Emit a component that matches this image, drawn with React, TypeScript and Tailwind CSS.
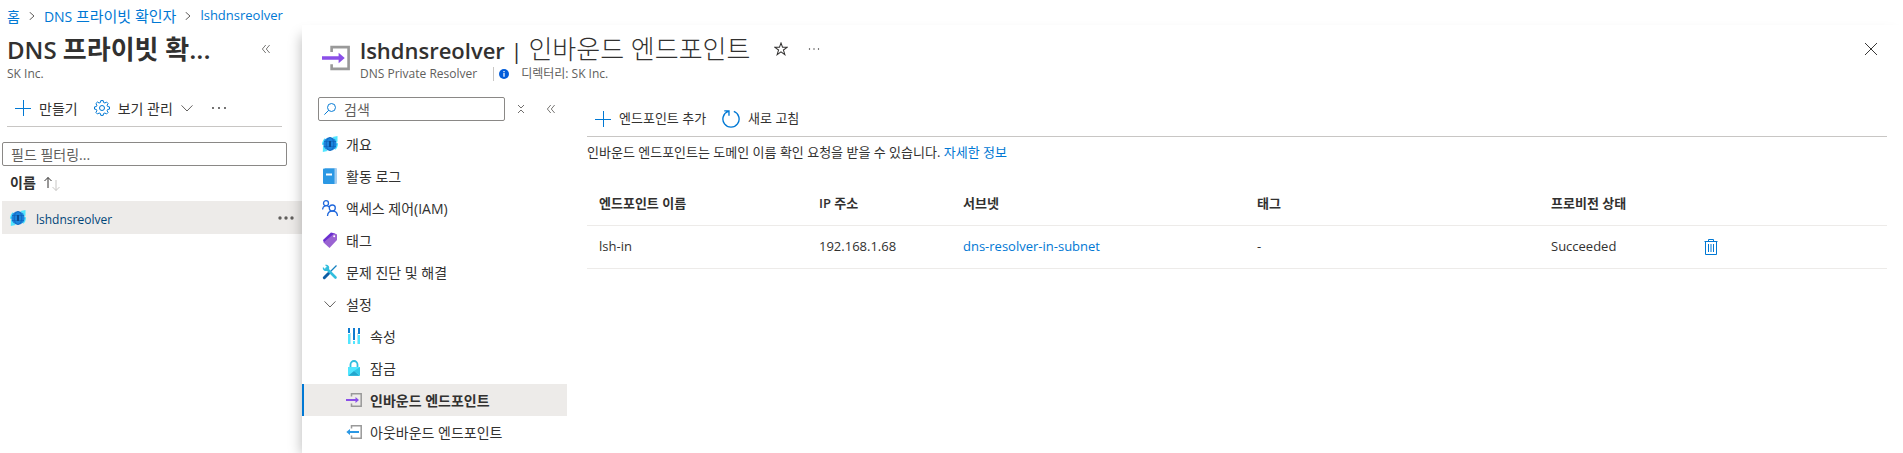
import type { ReactNode, SVGProps } from 'react'

// Base wrapper for every inline icon
function Svg({ children, className = 'h-4 w-4', ...rest }: SVGProps<SVGSVGElement>) {
  return (
    <svg viewBox="0 0 16 16" fill="none" aria-hidden="true" className={`${className} shrink-0`} {...rest}>
      {children}
    </svg>
  )
}

function PlusIcon() {
  return (
    <Svg>
      <path d="M8.5 0v16M0 8.5h16" stroke="#0078d4" />
    </Svg>
  )
}

function GearIcon() {
  return (
    <Svg>
      <path
        d="M6.8 .6h2.4l.4 1.9 1.3.5 1.6-1 1.6 1.6-1 1.6.5 1.3 1.9.4v2.2l-1.9.4-.5 1.3 1 1.6-1.6 1.6-1.6-1-1.3.5-.4 1.9H6.8l-.4-1.9-1.3-.5-1.6 1-1.6-1.6 1-1.6-.5-1.3L.5 9.1V6.9l1.9-.4.5-1.3-1-1.6L3.5 2l1.6 1 1.3-.5z"
        stroke="#0078d4"
      />
      <circle cx="8" cy="8" r="2.5" stroke="#0078d4" />
    </Svg>
  )
}

function ChevronDown({ className = 'h-3 w-3' }) {
  return (
    <Svg className={className}>
      <path d="M.7 4.5L8 12l7.3-7.5" stroke="#605e5c" strokeWidth="1.3" />
    </Svg>
  )
}

function ChevronRight() {
  return (
    <Svg className="h-2 w-2">
      <path d="M3 0l9 8-9 8" stroke="#605e5c" strokeWidth="2" />
    </Svg>
  )
}

function DoubleChevronLeft() {
  return (
    <Svg className="h-2 w-2">
      <path d="M7.5 0L.7 8l6.8 8M15.3 0L8.5 8l6.8 8" stroke="#605e5c" strokeWidth="1.7" />
    </Svg>
  )
}

function CollapseIcon() {
  return (
    <Svg className="h-2 w-2">
      <path d="M2 0l6 6 6-6M2 16l6-6 6 6" stroke="#605e5c" strokeWidth="1.8" />
    </Svg>
  )
}

function Dots({ className = 'h-4 w-4 text-[#323130]', r = 0.9 }) {
  return (
    <Svg className={className}>
      <g fill="currentColor">
        <circle cx="2" cy="8" r={r} />
        <circle cx="8" cy="8" r={r} />
        <circle cx="14" cy="8" r={r} />
      </g>
    </Svg>
  )
}

function ResolverIcon() {
  return (
    <Svg>
      <path d="M10.5 1L15.5 0v5L15 7zM5.500 15L.8 16l.2-7zM0 9a8 8 0 0 1 3-7l1 6zM16 7a8 8 0 0 1-3 7l-1-6z" fill="#50e6ff" />
      <circle cx="8" cy="8" r="6.7" fill="#1b84dd" />
      <path d="M2 5.5h12M2 10.5h12" stroke="#0f66bd" strokeWidth=".7" />
      <ellipse cx="8" cy="8" rx="3.8" ry="6.5" stroke="#0f62b8" strokeWidth=".8" />
      <path d="M7 5h2v6H7z" fill="#0a4c94" />
    </Svg>
  )
}

function LogIcon() {
  return (
    <Svg>
      <path d="M3 0h11a1 1 0 0 1 1 1v14a1 1 0 0 1-1 1H3z" fill="#a3cdf0" />
      <path d="M2 .5h10.5V16H2a1 1 0 0 1-1-1V1.5a1 1 0 0 1 1-1z" fill="#2b98e4" />
      <path d="M4 5.5h6v2H4z" fill="#fff" />
    </Svg>
  )
}

function AccessIcon() {
  return (
    <Svg>
      <g stroke="#2068dc" strokeWidth="1.3">
        <circle cx="4" cy="3.2" r="2.5" />
        <circle cx="10.3" cy="8" r="3" />
        <path d="M.6 9.5C.6 5 5.5 5 7 7M5.5 16c.3-6.5 9.7-6.5 10 0" />
      </g>
    </Svg>
  )
}

function TagIcon() {
  return (
    <Svg>
      <path d="M9 .5L1 8l1 3L13 1.5z" fill="#6b2fd0" />
      <path d="M12.5 1.2L15 2.5V8l-7.500 8-6-5.500z" fill="#9a63d2" />
      <circle cx="12.2" cy="4.2" r="1" fill="#fff" />
    </Svg>
  )
}

function ToolsIcon() {
  return (
    <Svg>
      <path d="M14.5 1.5L7 9" stroke="#1580c0" strokeWidth="1.3" />
      <path d="M6.5 9.5l-4.200 4.200" stroke="#0d5ea6" strokeWidth="3" strokeLinecap="round" />
      <path d="M4.5 4.5l9 9" stroke="#32bedd" strokeWidth="2.6" strokeLinecap="round" />
      <path d="M3 1l2 2-.5 1.5L3 5 1 3C0 6 3 8 5.5 6.5L7 5C8 2.5 5.5.3 3 1z" fill="#32bedd" />
    </Svg>
  )
}

function PropertiesIcon() {
  return (
    <Svg>
      <path d="M2 6h2v10H2zM7 13h2v3H7zM12 7h2v9h-2z" fill="#50e6ff" />
      <path d="M2 0h2v5H2zM7 0h2v12H7zM12 0h2v6h-2z" fill="#0f7bd0" />
      <path d="M4.5 5v11M11.5 5v11" stroke="#b4e6f5" />
    </Svg>
  )
}

function LockIcon() {
  return (
    <Svg>
      <path d="M4.5 8V4.5a3.5 3.5 0 0 1 7 0V8" stroke="#32bedd" strokeWidth="1.8" />
      <path d="M2 7h12v8a1 1 0 0 1-1 1H3a1 1 0 0 1-1-1z" fill="#50e6ff" />
      <path d="M14 7v8.5L8 11z" fill="#32c8e8" />
      <path d="M2.3 15.7L8 11l5.7 4.7z" fill="#22a5cc" />
    </Svg>
  )
}

function InboundIcon({ className = 'h-4 w-4' }) {
  return (
    <Svg className={className}>
      <path d="M5.5 4.5V1.8h9.7v12.4H5.5v-2.700" stroke="#999" strokeWidth="1.5" />
      <path d="M0 7h9.5V5L13 8l-3.5 3V9H0z" fill="#8a4fe8" />
    </Svg>
  )
}

function OutboundIcon() {
  return (
    <Svg>
      <path d="M5.5 4.5V1.8h9.7v12.4H5.5v-2.700" stroke="#999" strokeWidth="1.5" />
      <path d="M13 7H4V5L.3 8 4 11V9h9z" fill="#2b98e4" />
    </Svg>
  )
}

function RefreshIcon() {
  return (
    <Svg className="h-[18px] w-[18px]">
      <path d="M10.5 1.3A7.200 7.200 0 1 1 5.5 1.3M2 .8h4.200V5" stroke="#0078d4" strokeWidth="1.2" />
    </Svg>
  )
}

function TrashIcon() {
  return (
    <Svg>
      <path d="M1.5 2.5h13M5.5 2.5v-2h5v2M2.5 2.5v13h11v-13M5.500 5v8M8 5v8M10.500 5v8" stroke="#0078d4" />
    </Svg>
  )
}

const menuItems: { label: string; icon: ReactNode; nested?: boolean; active?: boolean }[] = [
  { label: '개요', icon: <ResolverIcon /> },
  { label: '활동 로그', icon: <LogIcon /> },
  { label: '액세스 제어(IAM)', icon: <AccessIcon /> },
  { label: '태그', icon: <TagIcon /> },
  { label: '문제 진단 및 해결', icon: <ToolsIcon /> },
  { label: '설정', icon: <ChevronDown /> },
  { label: '속성', icon: <PropertiesIcon />, nested: true },
  { label: '잠금', icon: <LockIcon />, nested: true },
  { label: '인바운드 엔드포인트', icon: <InboundIcon />, nested: true, active: true },
  { label: '아웃바운드 엔드포인트', icon: <OutboundIcon />, nested: true },
]

function Breadcrumb() {
  return (
    <nav aria-label="이동 경로" className="flex h-[25px] items-center gap-2 px-[7px] pt-[7px] text-[14px] text-[#0078d4]">
      <a href="#home" className="hover:underline">홈</a>
      <ChevronRight />
      <a href="#resolvers" className="hover:underline">
        DNS <span className="text-[15px]">프라이빗 확인자</span>
      </a>
      <ChevronRight />
      <a href="#lshdnsreolver" className="text-[13px] hover:underline">lshdnsreolver</a>
    </nav>
  )
}

function ResolverList() {
  return (
    <section className="w-[302px] shrink-0 pt-2">
      <div className="pr-5 pl-[7px]">
        <div className="flex h-8 items-center justify-between pr-3">
          <h2 className="text-[24px] leading-8 font-semibold">
            DNS <span className="text-[26px]">프라이빗 확...</span>
          </h2>
          <button aria-label="접기"><DoubleChevronLeft /></button>
        </div>
        <p className="pt-px text-[12px] leading-4 text-[#605e5c]">SK Inc.</p>
        <div className="mt-2 flex h-[37px] items-center border-b border-[#c8c6c4] pl-2 text-[14px]">
          <button className="flex items-center gap-2"><PlusIcon />만들기</button>
          <button className="ml-4 flex items-center gap-2"><GearIcon />보기 관리<ChevronDown /></button>
          <button aria-label="더 보기" className="ml-[18px]"><Dots /></button>
        </div>
      </div>
      <div className="mt-[15px] pl-0.5">
        <input
          aria-label="필드 필터링"
          placeholder="필드 필터링..."
          className="block h-6 w-[285px] rounded-[2px] border border-[#8a8886] px-2 text-[14px] outline-none placeholder:text-[#605e5c]"
        />
        <button className="flex h-[35px] items-center gap-2 pb-0.5 pl-2 text-[14px] font-semibold">
          이름
          <Svg>
            <path d="M4 13V2.5M.5 6L4 2.5 7.5 6" stroke="#323130" />
            <path d="M12 5v10.5M8.5 12l3.5 3.5 3.5-3.5" stroke="#c8c6c4" />
          </Svg>
        </button>
        <div className="flex h-[33px] items-center bg-[#edebe9] pr-2 pl-2">
          <ResolverIcon />
          <a href="#lshdnsreolver" className="ml-[10px] pt-1 text-[12px] text-[#004578]">lshdnsreolver</a>
          <button aria-label="항목 메뉴" className="ml-auto"><Dots className="h-4 w-4 text-[#605e5c]" r={1.7} /></button>
        </div>
      </div>
    </section>
  )
}

function SideMenu() {
  return (
    <div className="w-[265px] shrink-0">
      <div className="flex h-6 items-center pl-4">
        <label className="flex h-6 w-[187px] items-center gap-2 rounded-[2px] border border-[#8a8886] px-[5px]">
          <Svg className="h-3 w-3">
            <circle cx="10" cy="6" r="5.3" stroke="#0078d4" strokeWidth="1.3" />
            <path d="M6.2 9.8L.5 15.5" stroke="#0078d4" strokeWidth="1.3" />
          </Svg>
          <input
            aria-label="검색"
            placeholder="검색"
            className="w-full min-w-0 text-[14px] outline-none placeholder:text-[#605e5c]"
          />
        </label>
        <button aria-label="모두 축소" className="ml-3"><CollapseIcon /></button>
        <button aria-label="메뉴 접기" className="ml-[22px]"><DoubleChevronLeft /></button>
      </div>
      <ul className="mt-[7px] text-[14px]">
        {menuItems.map((item) => (
          <li key={item.label}>
            <a
              href="#menu"
              className={`flex h-8 items-center gap-2 border-l-2 ${item.nested ? 'pl-[42px]' : 'pl-[18px]'} ${
                item.active ? 'border-[#0078d4] bg-[#edebe9] font-semibold' : 'border-transparent'
              }`}
            >
              <span className="flex w-4 justify-center">{item.icon}</span>
              {item.label}
            </a>
          </li>
        ))}
      </ul>
    </div>
  )
}

function Endpoints() {
  return (
    <main className="mr-4 ml-5 min-w-0 flex-1 text-[13px]">
      <div className="flex h-10 items-center border-b border-[#c8c6c4] pt-1 pl-2">
        <button className="flex items-center gap-2"><PlusIcon />엔드포인트 추가</button>
        <button className="ml-4 flex items-center gap-2"><RefreshIcon />새로 고침</button>
      </div>
      <p className="h-[45px] pt-[5px] leading-5">
        인바운드 엔드포인트는 도메인 이름 확인 요청을 받을 수 있습니다.{' '}
        <a href="#docs" className="text-[#0078d4] hover:underline">자세한 정보</a>
      </p>
      <table className="w-full table-fixed text-left">
        <thead>
          <tr className="h-[43px] border-b border-[#edebe9]">
            <th className="w-[220px] px-3 font-semibold">엔드포인트 이름</th>
            <th className="w-[144px] px-3 font-semibold">IP 주소</th>
            <th className="w-[294px] px-3 font-semibold">서브넷</th>
            <th className="w-[294px] px-3 font-semibold">태그</th>
            <th className="w-[152px] px-3 font-semibold">프로비전 상태</th>
            <th aria-label="작업" className="px-3" />
          </tr>
        </thead>
        <tbody>
          <tr className="h-[43px] border-b border-[#edebe9]">
            <td className="px-3">lsh-in</td>
            <td className="px-3">192.168.1.68</td>
            <td className="px-3"><a href="#subnet" className="text-[#0078d4] hover:underline">dns-resolver-in-subnet</a></td>
            <td className="px-3">-</td>
            <td className="px-3">Succeeded</td>
            <td className="px-3">
              <button aria-label="삭제" className="block"><TrashIcon /></button>
            </td>
          </tr>
        </tbody>
      </table>
    </main>
  )
}

export default function App() {
  return (
    <div className="flex min-h-screen flex-col overflow-hidden bg-white font-['Open_Sans','Noto_Sans_CJK_KR',sans-serif] text-[#323130]">
      <Breadcrumb />
      <div className="flex flex-1">
        <ResolverList />
        <div className="min-w-0 flex-1 bg-white shadow-[-5px_6px_12px_-4px_rgba(0,0,0,0.25)]">
          <header className="flex h-[72px] items-start pt-2 pl-5">
            <InboundIcon className="mt-[11px] h-7 w-7" />
            <div className="ml-[10px]">
              <div className="flex h-8 items-center">
                <h1 className="text-[22px] leading-8">
                  <span className="font-semibold">lshdnsreolver</span> |{' '}
                  <span className="text-[26px] font-light">인바운드 엔드포인트</span>
                </h1>
                <button aria-label="즐겨찾기" className="ml-6">
                  <Svg className="h-[14px] w-[14px]">
                    <path d="M8 1.2l1.8 4.9H15l-4.2 3.1 1.6 5.2L8 11.3l-4.4 3.1 1.6-5.2L1 6.1h5.2z" stroke="#323130" strokeWidth="1.2" />
                  </Svg>
                </button>
                <button aria-label="더 보기" className="ml-5"><Dots className="h-3 w-3 text-[#323130]" /></button>
              </div>
              <div className="flex items-center pt-px text-[12px] leading-4 text-[#605e5c]">
                <span>DNS Private Resolver</span>
                <span className="ml-4 h-[14px] w-px bg-[#c8c6c4]" />
                <Svg className="ml-[5px] h-[10px] w-[10px]">
                  <circle cx="8" cy="8" r="8" fill="#015cda" />
                  <path d="M8 6.5v6M8 3.2v2" stroke="#fff" strokeWidth="2" />
                </Svg>
                <span className="ml-3">디렉터리: SK Inc.</span>
              </div>
            </div>
            <button aria-label="닫기" className="mt-[10px] mr-[26px] ml-auto">
              <Svg className="h-3 w-3">
                <path d="M0 0l16 16M16 0L0 16" stroke="#323130" strokeWidth="1.3" />
              </Svg>
            </button>
          </header>
          <div className="flex">
            <SideMenu />
            <Endpoints />
          </div>
        </div>
      </div>
    </div>
  )
}
